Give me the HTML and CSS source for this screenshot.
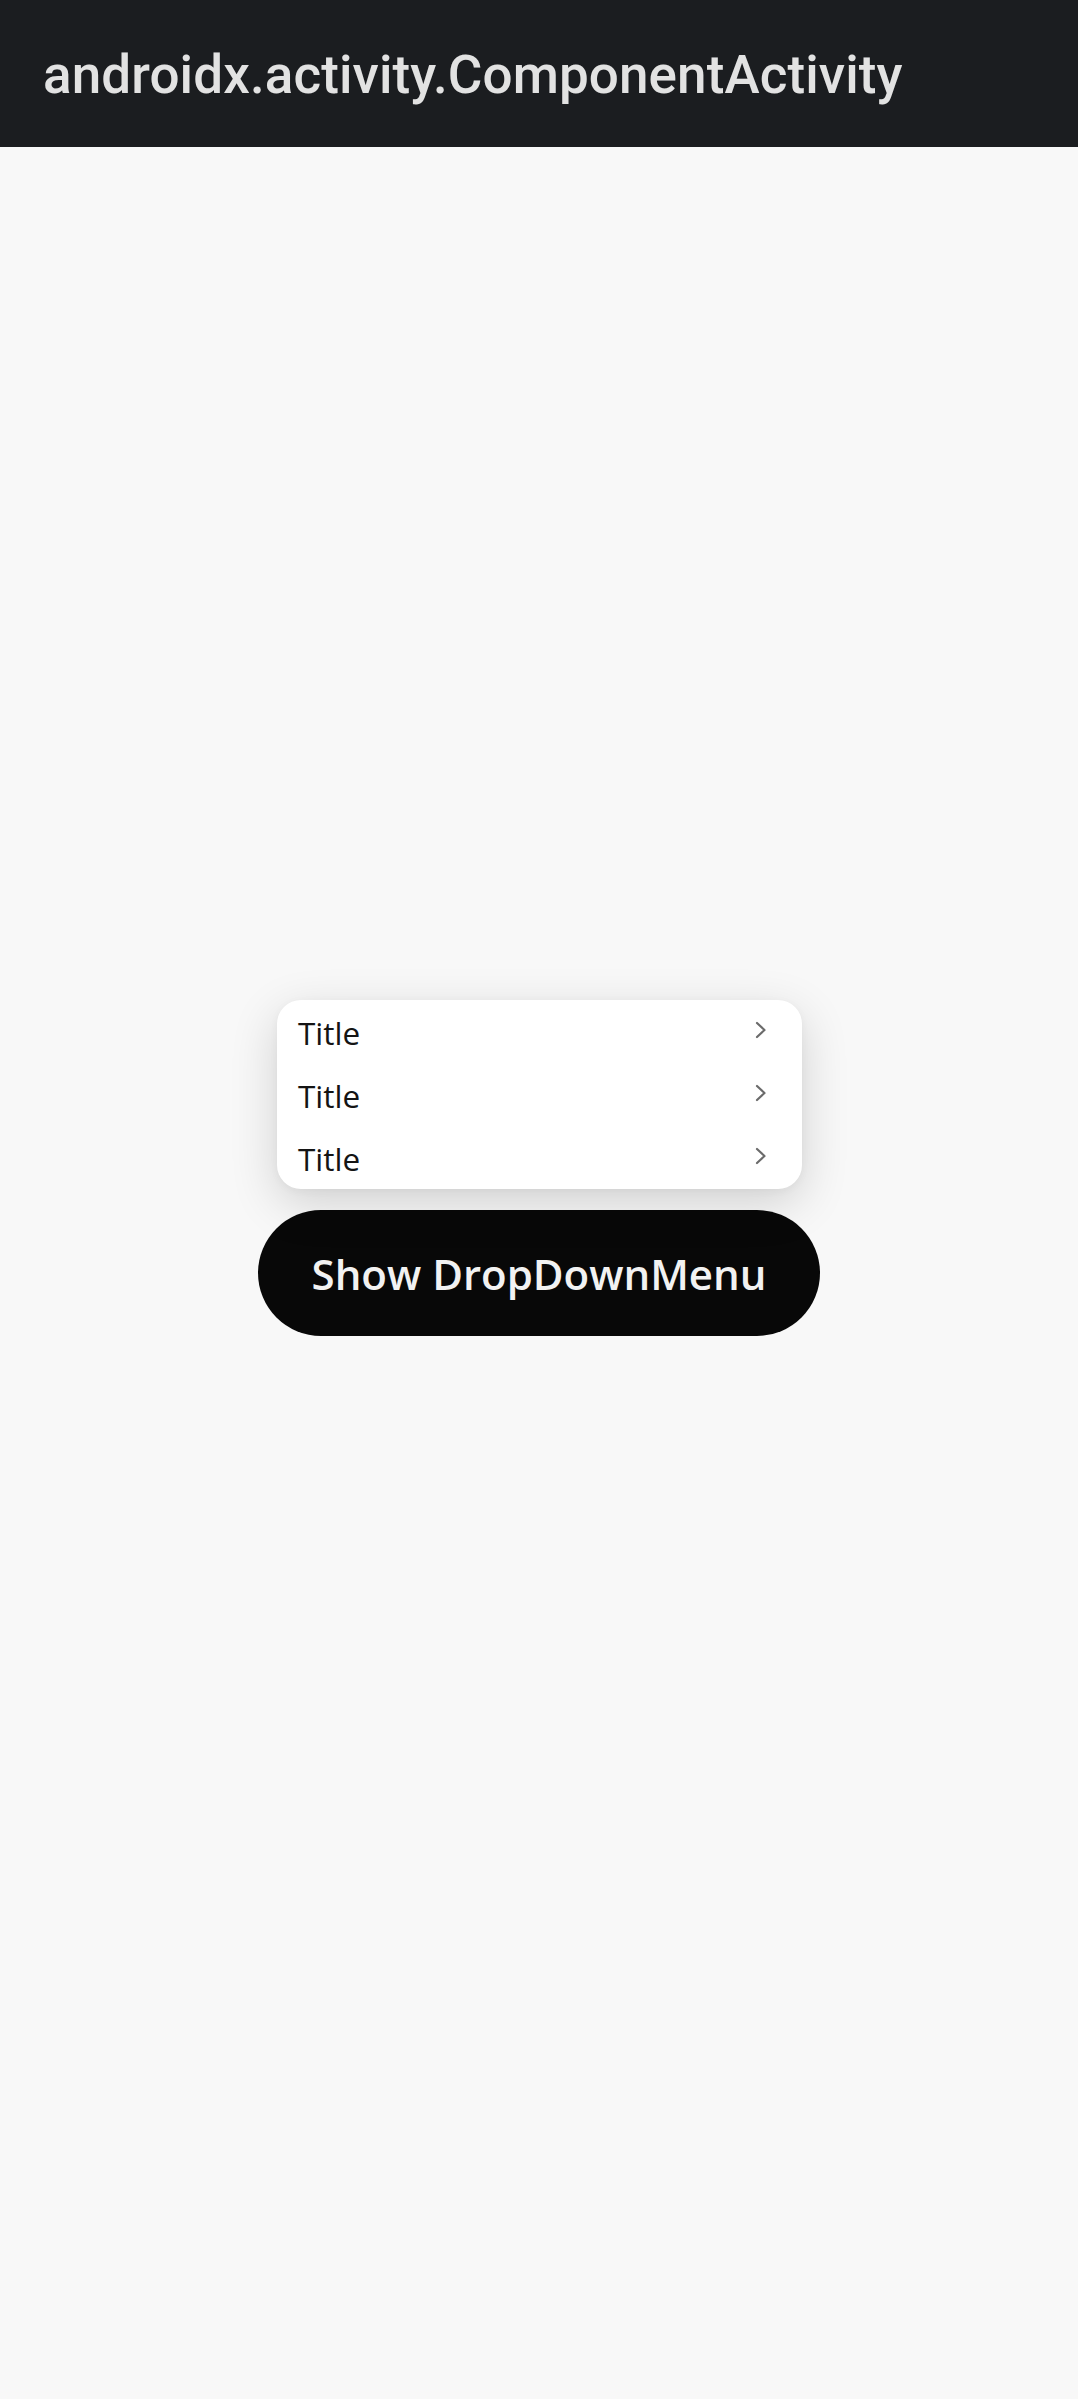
FILE: index.html
```html
<!DOCTYPE html>
<html>
<head>
<meta charset="utf-8">
<link rel="stylesheet" href="styles.css">
</head>
<body>
<header class="appbar">
  <h1 class="appbar-title">androidx.activity.ComponentActivity</h1>
</header>
<main class="content">
  <div class="anchor">
    <div class="menu">
      <div class="menu-item"><span class="menu-text">Title</span><svg class="chev" viewBox="0 0 14 20" width="14" height="20"><path d="M3 3 L10.5 10 L3 17" fill="none" stroke="#6b6b6b" stroke-width="2.2" stroke-linecap="round" stroke-linejoin="round"/></svg></div>
      <div class="menu-item"><span class="menu-text">Title</span><svg class="chev" viewBox="0 0 14 20" width="14" height="20"><path d="M3 3 L10.5 10 L3 17" fill="none" stroke="#6b6b6b" stroke-width="2.2" stroke-linecap="round" stroke-linejoin="round"/></svg></div>
      <div class="menu-item"><span class="menu-text">Title</span><svg class="chev" viewBox="0 0 14 20" width="14" height="20"><path d="M3 3 L10.5 10 L3 17" fill="none" stroke="#6b6b6b" stroke-width="2.2" stroke-linecap="round" stroke-linejoin="round"/></svg></div>
    </div>
    <button class="show-btn">Show DropDownMenu</button>
  </div>
</main>
</body>
</html>
```
FILE: styles.css
```css
html, body {
  margin: 0;
  padding: 0;
}
body {
  width: 1078px;
  height: 2399px;
  background: #f8f8f8;
  display: flex;
  flex-direction: column;
  overflow: hidden;
}
.appbar {
  height: 147px;
  background: #1b1d20;
  display: flex;
  align-items: center;
  padding-left: 43px;
  box-sizing: border-box;
}
.appbar-title {
  margin: 0;
  font-family: Roboto, "Liberation Sans", sans-serif;
  font-weight: 500;
  font-size: 53px;
  color: #e2e2e2;
  letter-spacing: 0.1px;
  line-height: 1;
  position: relative;
  top: 2px;
}
.content {
  flex: 1;
  display: flex;
  align-items: center;
  justify-content: center;
}
.anchor {
  position: relative;
}
.show-btn {
  display: block;
  width: 562px;
  height: 126px;
  border: none;
  border-radius: 63px;
  background: #080808;
  color: #f2f2f2;
  font-family: "Open Sans", "Noto Sans", sans-serif;
  font-weight: 600;
  font-size: 42px;
  padding: 0;
  margin: 0;
}
.menu {
  position: absolute;
  left: 19px;
  bottom: calc(100% + 21px);
  width: 525px;
  background: #ffffff;
  border-radius: 24px;
  box-shadow: 0 14px 48px rgba(0,0,0,0.16), 0 2px 8px rgba(0,0,0,0.04);
  display: flex;
  flex-direction: column;
}
.menu-item {
  height: 63px;
  display: flex;
  align-items: center;
  justify-content: space-between;
  padding: 0 34px 0 21px;
}
.menu-text {
  font-family: "Open Sans", "Noto Sans", sans-serif;
  font-size: 31.5px;
  color: #141414;
  position: relative;
  top: 1px;
}
.chev {
  display: block;
  position: relative;
  top: -2px;
}
```
